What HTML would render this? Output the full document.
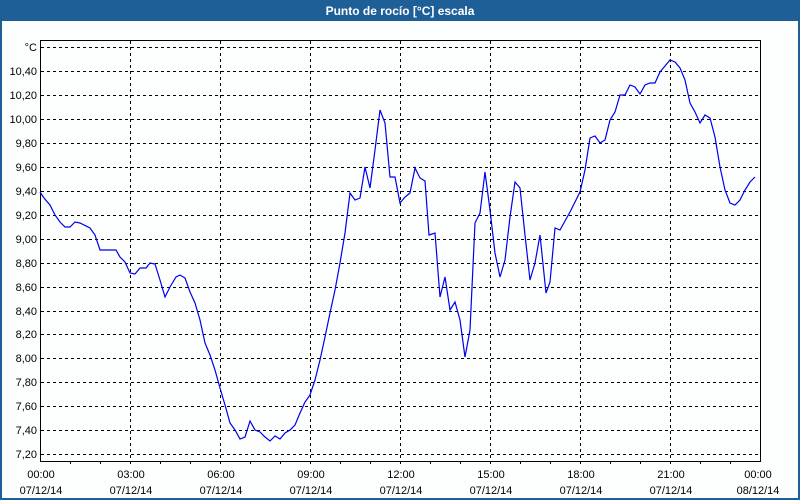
<!DOCTYPE html>
<html><head><meta charset="utf-8"><style>
html,body{margin:0;padding:0;width:800px;height:500px;overflow:hidden;background:#fff}
svg{display:block}
text{font-family:"Liberation Sans","DejaVu Sans",sans-serif;font-size:11px;fill:#000}
</style></head><body>
<svg width="800" height="500" viewBox="0 0 800 500" xmlns="http://www.w3.org/2000/svg">
<rect x="0" y="0" width="800" height="500" fill="#1f5f98"/>
<rect x="2" y="21" width="796" height="477" fill="#fdfefe"/>
<text x="400" y="15" text-anchor="middle" style="font-weight:bold;font-size:12px;fill:#fff">Punto de rocío [°C] escala</text>
<g stroke="#000" stroke-width="1" stroke-dasharray="3,3" shape-rendering="crispEdges">
<line x1="41" y1="47.5" x2="760" y2="47.5"/><line x1="41" y1="71.5" x2="760" y2="71.5"/><line x1="41" y1="95.5" x2="760" y2="95.5"/><line x1="41" y1="119.5" x2="760" y2="119.5"/><line x1="41" y1="143.5" x2="760" y2="143.5"/><line x1="41" y1="167.5" x2="760" y2="167.5"/><line x1="41" y1="191.5" x2="760" y2="191.5"/><line x1="41" y1="215.5" x2="760" y2="215.5"/><line x1="41" y1="239.5" x2="760" y2="239.5"/><line x1="41" y1="263.5" x2="760" y2="263.5"/><line x1="41" y1="287.5" x2="760" y2="287.5"/><line x1="41" y1="311.5" x2="760" y2="311.5"/><line x1="41" y1="334.5" x2="760" y2="334.5"/><line x1="41" y1="358.5" x2="760" y2="358.5"/><line x1="41" y1="382.5" x2="760" y2="382.5"/><line x1="41" y1="406.5" x2="760" y2="406.5"/><line x1="41" y1="430.5" x2="760" y2="430.5"/><line x1="41" y1="454.5" x2="760" y2="454.5"/>
<line x1="130.5" y1="41" x2="130.5" y2="461"/><line x1="220.5" y1="41" x2="220.5" y2="461"/><line x1="310.5" y1="41" x2="310.5" y2="461"/><line x1="400.5" y1="41" x2="400.5" y2="461"/><line x1="490.5" y1="41" x2="490.5" y2="461"/><line x1="580.5" y1="41" x2="580.5" y2="461"/><line x1="670.5" y1="41" x2="670.5" y2="461"/>
</g>
<g stroke="#000" stroke-width="1" shape-rendering="crispEdges" fill="none">
<rect x="40.5" y="40.5" width="720" height="421"/>
<path d="M70.5 461v3M100.5 461v3M130.5 461v3M160.5 461v3M190.5 461v3M220.5 461v3M250.5 461v3M280.5 461v3M310.5 461v3M340.5 461v3M370.5 461v3M400.5 461v3M430.5 461v3M460.5 461v3M490.5 461v3M520.5 461v3M550.5 461v3M580.5 461v3M610.5 461v3M640.5 461v3M670.5 461v3M700.5 461v3M730.5 461v3"/>
</g>
<g text-anchor="end">
<text x="37" y="51">°C</text><text x="37" y="75">10,40</text><text x="37" y="99">10,20</text><text x="37" y="123">10,00</text><text x="37" y="147">9,80</text><text x="37" y="171">9,60</text><text x="37" y="195">9,40</text><text x="37" y="219">9,20</text><text x="37" y="243">9,00</text><text x="37" y="267">8,80</text><text x="37" y="291">8,60</text><text x="37" y="315">8,40</text><text x="37" y="338">8,20</text><text x="37" y="362">8,00</text><text x="37" y="386">7,80</text><text x="37" y="410">7,60</text><text x="37" y="434">7,40</text><text x="37" y="458">7,20</text>
</g>
<g text-anchor="middle">
<text x="41" y="478">00:00</text><text x="41" y="494">07/12/14</text>
<text x="131" y="478">03:00</text><text x="131" y="494">07/12/14</text>
<text x="221" y="478">06:00</text><text x="221" y="494">07/12/14</text>
<text x="311" y="478">09:00</text><text x="311" y="494">07/12/14</text>
<text x="401" y="478">12:00</text><text x="401" y="494">07/12/14</text>
<text x="491" y="478">15:00</text><text x="491" y="494">07/12/14</text>
<text x="581" y="478">18:00</text><text x="581" y="494">07/12/14</text>
<text x="671" y="478">21:00</text><text x="671" y="494">07/12/14</text>
<text x="758" y="478">00:00</text><text x="758" y="494">08/12/14</text>
</g>
<polyline fill="none" stroke="#0000ee" stroke-width="1.2" points="40,192 44,198 50,205 55,215 60,222 65,227 70,227 75,222 80,223 90,228 95,235 100,250 116,250 120,257 125,262 130,273 135,274 140,268 146,268 150,263 155,264 160,280 165,297 170,287 176,277 180,275 185,278 190,292 195,303 200,320 205,343 210,355 215,370 220,388 225,405 230,423 235,430 240,439 245,437 250,421 255,430 260,432 265,437 270,441 275,436 280,439 285,433 290,430 295,425 300,413 305,402 310,395 315,380 320,360 325,337 330,313 335,290 340,263 345,233 350,193 355,200 360,198 365,167 370,188 375,150 380,110 385,123 390,177 395,177 400,203 405,197 410,193 415,168 420,178 425,181 429,235 435,233 440,297 445,277 450,310 455,302 460,320 465,357 470,330 475,223 480,213 485,172 490,210 495,253 500,277 505,260 510,217 515,182 520,188 525,235 530,280 535,263 540,235 546,293 550,282 555,228 560,230 570,212 580,192 585,170 590,138 595,136 600,143 605,140 610,120 615,112 620,95 625,95 630,85 635,87 640,94 645,85 650,83 655,83 660,72 665,66 670,60 675,62 680,68 685,80 690,103 695,112 700,123 705,115 710,118 715,137 720,167 725,190 730,203 735,205 740,200 745,190 750,182 755,177"/>
</svg>
</body></html>
